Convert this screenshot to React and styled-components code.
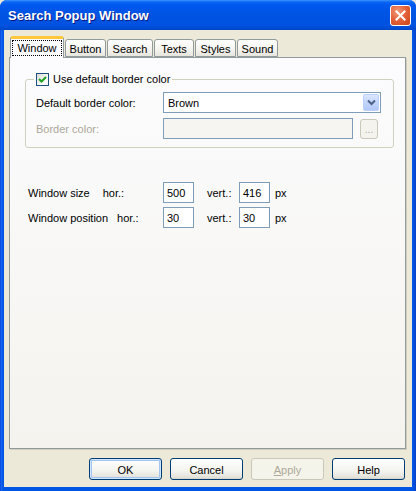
import React from "react";
import styled, { createGlobalStyle } from "styled-components";

const GlobalStyle = createGlobalStyle`
  html, body { margin: 0; padding: 0; background: #ECE9D8; }
  body { font-family: "Liberation Sans", Arial, sans-serif; font-size: 11px; color: #000; }
`;

const Frame = styled.div`
  width: 416px;
  height: 491px;
  box-sizing: border-box;
  display: flex;
  flex-direction: column;
  background: linear-gradient(to right, #0831D9 0, #166AEE 1px, #0055E5 3px, #0055E5 calc(100% - 3px), #0840C8 100%);
  border-radius: 7px 7px 0 0;
  overflow: hidden;
`;

const TitleBar = styled.div`
  height: 30px;
  flex: none;
  display: flex;
  align-items: center;
  justify-content: space-between;
  padding: 0 5px 0 8px;
  background: linear-gradient(to bottom, #3D95FF 0, #0A66F5 2px, #0058EE 5px, #0054E3 50%, #0052E0 85%, #0047C8 100%);
`;

const Title = styled.span`
  font-family: "Liberation Sans", Arial, sans-serif;
  font-weight: bold;
  font-size: 13px;
  color: #fff;
  text-shadow: 1px 1px 0 #0A1883;
  padding-top: 1px;
`;

const CloseButton = styled.div`
  width: 19px;
  height: 19px;
  border: 1px solid #fff;
  border-radius: 3px;
  background: radial-gradient(circle at 35% 30%, #F09A7A 0, #E4643D 45%, #CC4216 100%);
  display: flex;
  align-items: center;
  justify-content: center;
  margin-top: 1px;
`;

const Body = styled.div`
  flex: 1;
  margin: 0 4px 4px 4px;
  background: #ECE9D8;
  display: flex;
  flex-direction: column;
  padding: 6px 6px 7px 5px;
  box-sizing: border-box;
`;

const TabStrip = styled.div`
  display: flex;
  align-items: flex-end;
  height: 21px;
  padding-left: 1px;
  gap: 1px;
  position: relative;
  z-index: 1;
`;

const Tab = styled.div`
  box-sizing: border-box;
  width: ${(p) => p.$w}px;
  height: ${(p) => (p.$active ? 22 : 18)}px;
  margin-bottom: ${(p) => (p.$active ? -1 : 0)}px;
  border: 1px solid #919B9C;
  border-bottom: ${(p) => (p.$active ? "none" : "1px solid #919B9C")};
  border-top: ${(p) => (p.$active ? "3px solid #FFC83C" : "1px solid #919B9C")};
  border-radius: 3px 3px 0 0;
  background: ${(p) => (p.$active ? "#FCFCFE" : "linear-gradient(to bottom, #FFFFFF 0, #F4F3EE 60%, #E6E5DE 100%)")};
  display: flex;
  align-items: center;
  justify-content: center;
  padding: ${(p) => (p.$active ? "0 0 2px" : "1px 0 0")};
`;

const FocusLabel = styled.span`
  display: flex;
  align-items: center;
  justify-content: center;
  width: 100%;
  height: 16px;
  box-sizing: border-box;
  margin: 0 1px;
  outline: 1px dotted #000;
  outline-offset: -1px;
  padding-top: 1px;
`;

const Panel = styled.div`
  flex: 1;
  border: 1px solid #919B9C;
  background: linear-gradient(to bottom, #FCFCFE 0, #F4F3EE 100%);
  padding: 15px 11px 0 15px;
  box-shadow: 1px 1px 0 #D0CEBF;
`;

const Group = styled.fieldset`
  margin: 0;
  padding: 6px 12px 8px 10px;
  border: 1px solid #D0D0BF;
  border-radius: 3px;
`;

const Legend = styled.legend`
  padding: 0 2px;
  margin-left: -2px;
  display: flex;
  align-items: center;
  gap: 4px;
  height: 13px;
  line-height: 13px;
`;

const CheckBox = styled.span`
  width: 13px;
  height: 13px;
  box-sizing: border-box;
  border: 1px solid #1C5180;
  background: linear-gradient(135deg, #DCDCD7 0, #F7F7F5 60%, #FFFFFF 100%);
  display: flex;
  align-items: center;
  justify-content: center;
`;

const FieldRow = styled.div`
  display: flex;
  align-items: center;
  height: 21px;
  margin-top: ${(p) => p.$mt || 0}px;
`;

const FieldLabel = styled.span`
  width: 127px;
  flex: none;
  color: ${(p) => (p.$disabled ? "#ACA899" : "#000")};
`;

const Select = styled.div`
  flex: 1;
  height: 21px;
  box-sizing: border-box;
  border: 1px solid #7F9DB9;
  background: #fff;
  display: flex;
  align-items: center;
  justify-content: space-between;
  padding: 0 1px 0 4px;
`;

const DropButton = styled.span`
  width: 16px;
  height: 17px;
  box-sizing: border-box;
  border: 1px solid #BAD0FB;
  border-radius: 2px;
  background: linear-gradient(to bottom, #DCE7FE 0, #C3D5FD 50%, #B2C8F9 100%);
  display: flex;
  align-items: center;
  justify-content: center;
`;

const TextBox = styled.div`
  box-sizing: border-box;
  height: 21px;
  border: 1px solid #7F9DB9;
  background: ${(p) => (p.$disabled ? "#F6F5F1" : "#fff")};
  width: ${(p) => (p.$w ? `${p.$w}px` : "auto")};
  flex: ${(p) => (p.$w ? "none" : 1)};
  display: flex;
  align-items: center;
  padding: 1px 0 0 3px;
`;

const SmallButton = styled.span`
  width: 18px;
  height: 20px;
  box-sizing: border-box;
  margin: 0 3px 0 7px;
  border: 1px solid #C9C7BA;
  border-radius: 3px;
  background: #F4F3EE;
  color: #ACA899;
  display: flex;
  align-items: flex-end;
  justify-content: center;
  padding-bottom: 4px;
  font-size: 10px;
  line-height: 8px;
`;

const SizeBlock = styled.div`
  margin: 34px 0 0 3px;
  display: flex;
  flex-direction: column;
  gap: 4px;
`;

const SizeRow = styled.div`
  display: flex;
  align-items: center;
  height: 21px;
`;

const Lead = styled.span`
  width: 135px;
  flex: none;
  display: flex;
`;

const Axis = styled.span`
  margin-left: ${(p) => p.$ml}px;
`;

const VertLabel = styled.span`
  width: 32px;
  margin-left: 13px;
  flex: none;
`;

const Unit = styled.span`
  margin-left: 5px;
`;

const ButtonRow = styled.div`
  display: flex;
  justify-content: flex-end;
  gap: 8px;
  margin-top: 9px;
  padding-right: 1px;
`;

const Button = styled.div`
  width: 73px;
  height: 22px;
  box-sizing: border-box;
  border: 1px solid ${(p) => (p.$disabled ? "#C9C7BA" : "#003C74")};
  border-radius: 3px;
  background: ${(p) =>
    p.$disabled ? "#F5F4EA" : "linear-gradient(to bottom, #FFFFFF 0, #F3F3EF 60%, #E3E2DA 92%, #D6D0C5 100%)"};
  color: ${(p) => (p.$disabled ? "#ACA899" : "#000")};
  box-shadow: ${(p) => (p.$default ? "inset 0 0 0 1px #CEE7FF, inset 0 0 0 2px #A6C4F0" : "none")};
  display: flex;
  align-items: center;
  justify-content: center;
  padding-top: 1px;
`;

const tabs = [
  { label: "Window", w: 54, active: true },
  { label: "Button", w: 41 },
  { label: "Search", w: 46 },
  { label: "Texts", w: 40 },
  { label: "Styles", w: 41 },
  { label: "Sound", w: 41 },
];

export default function App() {
  return (
    <>
      <GlobalStyle />
      <Frame>
        <TitleBar>
          <Title>Search Popup Window</Title>
          <CloseButton>
            <svg width="11" height="11" viewBox="0 0 11 11">
              <path d="M1.5 1.5 L9.5 9.5 M9.5 1.5 L1.5 9.5" stroke="#fff" strokeWidth="2" strokeLinecap="square" />
            </svg>
          </CloseButton>
        </TitleBar>
        <Body>
          <TabStrip>
            {tabs.map((t) => (
              <Tab key={t.label} $w={t.w} $active={t.active}>
                {t.active ? <FocusLabel>{t.label}</FocusLabel> : t.label}
              </Tab>
            ))}
          </TabStrip>
          <Panel>
            <Group>
              <Legend>
                <CheckBox>
                  <svg width="9" height="9" viewBox="0 0 9 9">
                    <path d="M1 4 L3.5 6.5 L8 2" fill="none" stroke="#21A121" strokeWidth="2" />
                  </svg>
                </CheckBox>
                <span>Use default border color</span>
              </Legend>
              <FieldRow>
                <FieldLabel>Default border color:</FieldLabel>
                <Select>
                  <span>Brown</span>
                  <DropButton>
                    <svg width="9" height="7" viewBox="0 0 9 7">
                      <path d="M1 1.5 L4.5 5 L8 1.5" fill="none" stroke="#4D6185" strokeWidth="2" />
                    </svg>
                  </DropButton>
                </Select>
              </FieldRow>
              <FieldRow $mt={5}>
                <FieldLabel $disabled>Border color:</FieldLabel>
                <TextBox $disabled />
                <SmallButton>...</SmallButton>
              </FieldRow>
            </Group>
            <SizeBlock>
              <SizeRow>
                <Lead>
                  <span>Window size</span>
                  <Axis $ml={13}>hor.:</Axis>
                </Lead>
                <TextBox $w={31}>500</TextBox>
                <VertLabel>vert.:</VertLabel>
                <TextBox $w={31}>416</TextBox>
                <Unit>px</Unit>
              </SizeRow>
              <SizeRow>
                <Lead>
                  <span>Window position</span>
                  <Axis $ml={9}>hor.:</Axis>
                </Lead>
                <TextBox $w={31}>30</TextBox>
                <VertLabel>vert.:</VertLabel>
                <TextBox $w={31}>30</TextBox>
                <Unit>px</Unit>
              </SizeRow>
            </SizeBlock>
          </Panel>
          <ButtonRow>
            <Button $default>OK</Button>
            <Button>Cancel</Button>
            <Button $disabled>
              <span><u>A</u>pply</span>
            </Button>
            <Button>Help</Button>
          </ButtonRow>
        </Body>
      </Frame>
    </>
  );
}
